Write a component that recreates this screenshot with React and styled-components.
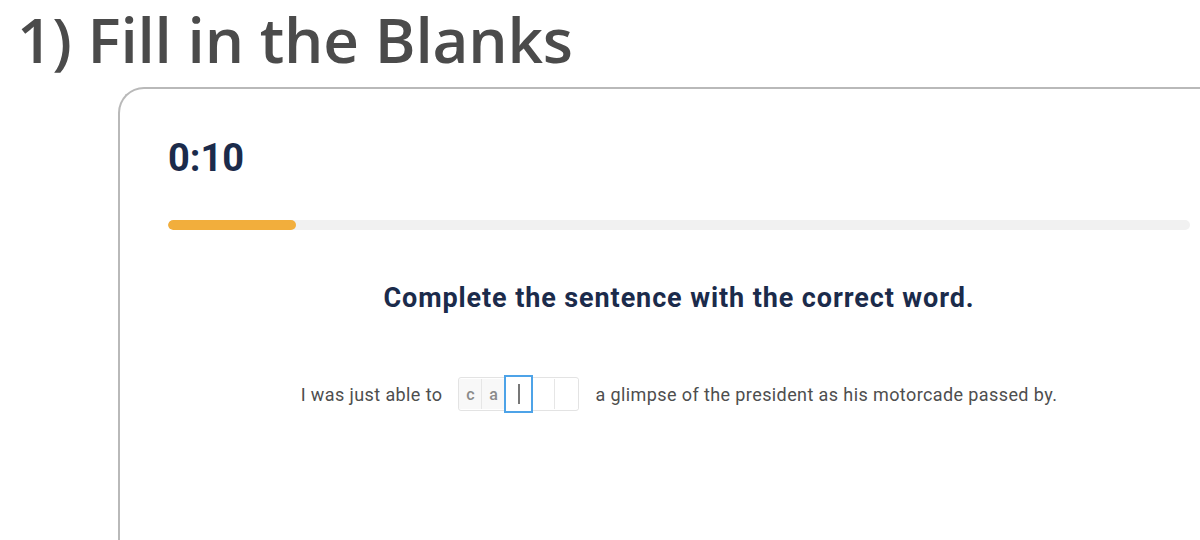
import React from 'react';
import styled, { createGlobalStyle } from 'styled-components';

const GlobalStyle = createGlobalStyle`
  html, body {
    margin: 0;
    padding: 0;
    background: #fff;
    overflow: hidden;
  }
  body {
    width: 1200px;
    height: 540px;
  }
`;

const Page = styled.div`
  width: 1200px;
  height: 540px;
  overflow: hidden;
  display: flex;
  flex-direction: column;
`;

const Title = styled.h1`
  margin: 0;
  padding: 0 0 0 17px;
  height: 87px;
  box-sizing: border-box;
  font-family: 'Open Sans', sans-serif;
  font-weight: 600;
  font-size: 62px;
  line-height: 78px;
  color: #4b4b4b;
  letter-spacing: -0.2px;
  white-space: nowrap;
`;

const Card = styled.section`
  margin-left: 118px;
  width: 1122px;
  flex: 1;
  box-sizing: border-box;
  border-top: 2px solid #b9b9b9;
  border-left: 2px solid #b9b9b9;
  border-top-left-radius: 26px;
  padding: 49px 50px 0 48px;
  display: flex;
  flex-direction: column;
  font-family: Roboto, 'Liberation Sans', sans-serif;
`;

const Timer = styled.div`
  font-size: 38px;
  font-weight: 700;
  line-height: 40px;
  color: #1b2b4b;
`;

const Track = styled.div`
  margin-top: 42px;
  height: 10px;
  border-radius: 5px;
  background: #f1f1f1;
  overflow: hidden;
`;

const Fill = styled.div`
  height: 100%;
  border-radius: 5px;
  background: #f2ae3c;
`;

const Prompt = styled.h2`
  margin: 53px 0 0;
  text-align: center;
  font-size: 27px;
  font-weight: 700;
  letter-spacing: 0.9px;
  line-height: 30px;
  color: #1b2b4b;
`;

const Sentence = styled.div`
  margin-top: 64px;
  display: flex;
  align-items: center;
  justify-content: center;
  gap: 16px;
  font-size: 18px;
  letter-spacing: 0.4px;
  color: #4e4e4e;
`;

const Blanks = styled.div`
  display: flex;
  align-items: center;
  height: 32px;
  border: 1px solid #e3e3e3;
  border-radius: 3px;
  background: #fff;
`;

const Letter = styled.span`
  box-sizing: border-box;
  width: ${(p) => (p.active ? '29px' : '23px')};
  height: ${(p) => (p.active ? '38px' : '30px')};
  margin: ${(p) => (p.active ? '0 -1px' : '0')};
  display: flex;
  align-items: center;
  justify-content: center;
  font-size: 16px;
  font-weight: 500;
  letter-spacing: 0;
  color: #8a8a8a;
  background: ${(p) => (p.filled ? '#f8f8f8' : '#fff')};
  border-right: ${(p) => (p.last || p.active ? 'none' : '1px solid #e6e6e6')};
  border: ${(p) => (p.active ? '2px solid #4da3e8' : undefined)};
  position: relative;
  z-index: ${(p) => (p.active ? 1 : 0)};
`;

const Caret = styled.span`
  width: 2px;
  height: 20px;
  background: #777;
`;

const letters = ['c', 'a', '', '', ''];

export default function App() {
  const progress = 0.125;
  return (
    <Page>
      <GlobalStyle />
      <Title>1) Fill in the Blanks</Title>
      <Card>
        <Timer>0:10</Timer>
        <Track>
          <Fill style={{ width: `${progress * 100}%` }} />
        </Track>
        <Prompt>Complete the sentence with the correct word.</Prompt>
        <Sentence>
          <span>I was just able to</span>
          <Blanks>
            {letters.map((l, i) => (
              <Letter
                key={i}
                filled={l !== ''}
                active={i === 2}
                last={i === letters.length - 1}
              >
                {i === 2 ? <Caret /> : l}
              </Letter>
            ))}
          </Blanks>
          <span>a glimpse of the president as his motorcade passed by.</span>
        </Sentence>
      </Card>
    </Page>
  );
}
